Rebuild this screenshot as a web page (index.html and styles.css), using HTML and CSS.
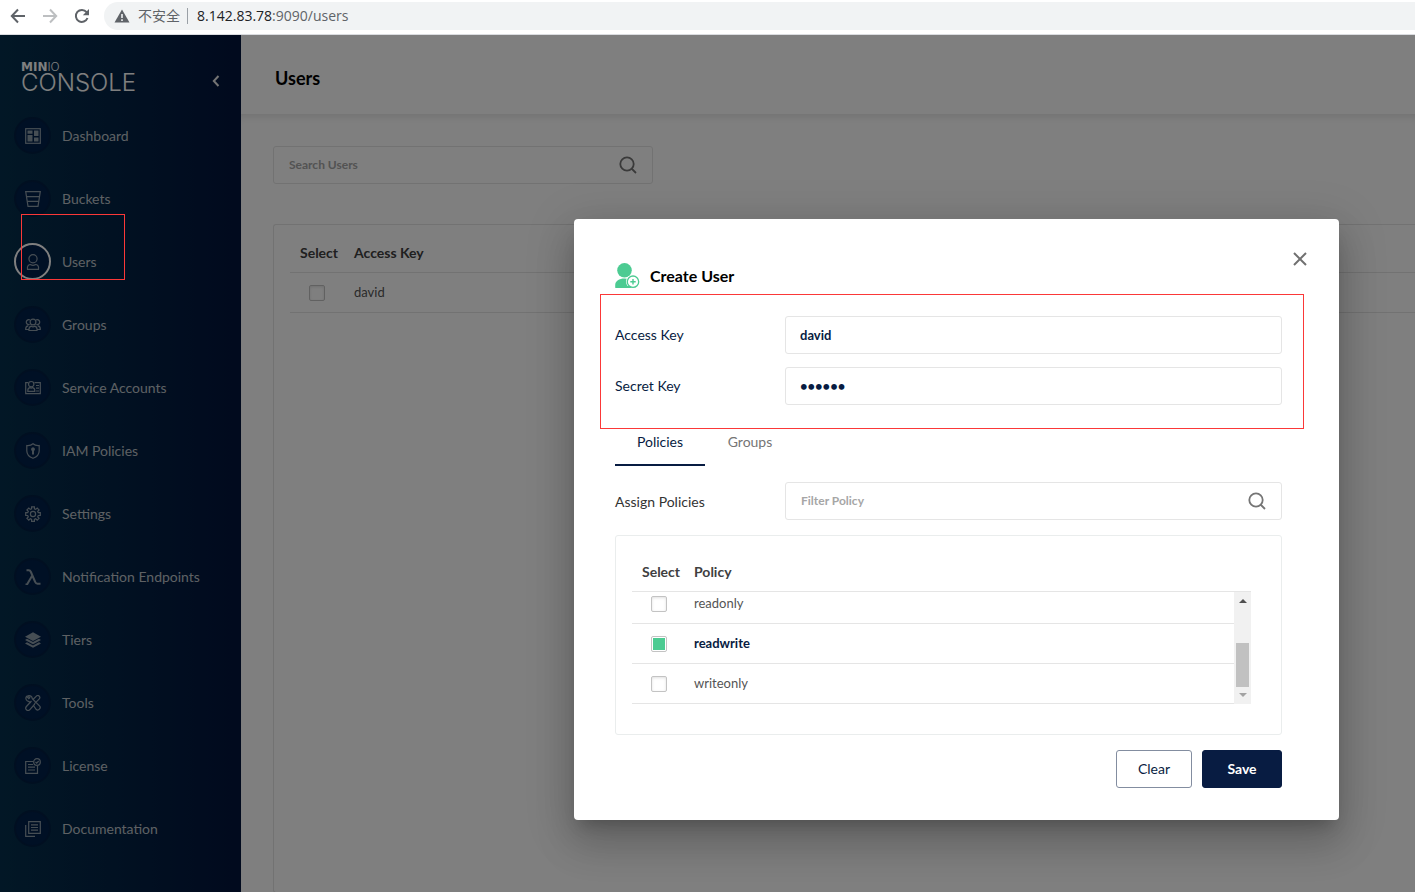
FILE: index.html
```html
<!DOCTYPE html>
<html lang="en">
<head>
<meta charset="utf-8">
<title>MinIO Console</title>
<link rel="stylesheet" href="styles.css">
</head>
<body>
<header class="browser">
  <button class="nav-btn" aria-label="Back"><svg width="16" height="16" viewBox="0 0 16 16"><path d="M15 8H2M8 1.5 1.8 8 8 14.500" fill="none" stroke="#5f6368" stroke-width="2"/></svg></button>
  <button class="nav-btn" aria-label="Forward"><svg width="16" height="16" viewBox="0 0 16 16"><path d="M1 8h13M8 1.500 14.200 8 8 14.500" fill="none" stroke="#bdbfc1" stroke-width="2"/></svg></button>
  <button class="nav-btn" aria-label="Reload"><svg width="16" height="16" viewBox="0 0 16 16"><path d="M13.500 10A6 6 0 1 1 12.600 4.200" fill="none" stroke="#5f6368" stroke-width="2"/><path d="M15 1v6.200H8.800z" fill="#5f6368"/></svg></button>
  <div class="address">
    <svg width="16" height="14" viewBox="0 0 16 14"><path d="M8 0.500 15.500 13.500H.5z" fill="#5f6368"/><path d="M8 5v4M8 10.300v1.700" stroke="#f1f3f4" stroke-width="1.600"/></svg>
    <span class="insecure">不安全</span>
    <span class="url"><b>8.142.83.78</b>:9090/users</span>
  </div>
</header>

<div class="app">
  <aside class="sidebar">
    <div class="brand">
      <div class="logo"><span class="logo-top"><b>MIN</b>IO</span><span class="logo-main">CONSOLE</span></div>
      <button class="collapse" aria-label="Collapse menu"><svg width="8" height="12" viewBox="0 0 8 12"><path d="M6.500 1 1.800 6l4.700 5" fill="none" stroke="currentColor" stroke-width="2"/></svg></button>
    </div>
    <nav class="menu">
      <a href="#" class="item"><span class="disc"><svg viewBox="0 0 16 16"><rect x=".7" y=".7" width="14.600" height="14.600"/><path class="solid" d="M2.500 2.500h5v3.200h-5zM9 2.500h4.500v5.500H9zM2.500 7h5v6.500h-5zM9 9.500h4.500v4H9z"/></svg></span>Dashboard</a>
      <a href="#" class="item"><span class="disc"><svg viewBox="0 0 16 16"><path d="M.7.7h14.600L13 15.300H3zM1.500 5.600h13M2.200 10.400h11.600"/></svg></span>Buckets</a>
      <a href="#" class="item active"><span class="disc"><svg viewBox="0 0 16 16"><circle cx="8" cy="4.800" r="4.100"/><path d="M2.500 15.300c-.6-3.500 1.200-4.800 3-4.800 1.600 1 3.400 1 5 0 1.800 0 3.600 1.300 3 4.800z"/></svg></span>Users</a>
      <a href="#" class="item"><span class="disc"><svg viewBox="0 0 16 16"><circle cx="8" cy="5" r="2.900"/><path d="M4 13.500c-.4-3 1-4 2.300-4.300 1 .7 2.400.7 3.400 0C11 9.500 12.400 10.500 12 13.500zM4.700 7.500C2 8 1 6 1.400 4.500S3.500 2.200 5 3M11.300 7.500C14 8 15 6 14.600 4.500S12.500 2.200 11 3M3.500 12.500H.7C.5 10 1.500 9 3.300 8.800M12.500 12.500h2.800c.2-2.500-.8-3.500-2.600-3.700"/></svg></span>Groups</a>
      <a href="#" class="item"><span class="disc"><svg viewBox="0 0 16 16"><path d="M3 2.700H.7v11h14.600v-11H9.500"/><circle cx="6.200" cy="4.200" r="2.700"/><path d="M2.800 11.300c-.2-2.500 1-3.500 2-3.700.8.500 2 .5 2.800 0 1.200.2 2.400 1.200 2.200 3.700zM11 5.500h3M11 8.200h3M11 11h3"/></svg></span>Service Accounts</a>
      <a href="#" class="item"><span class="disc"><svg viewBox="0 0 16 16"><path d="M8 .8c1.800 1.500 4 1.900 6.200 1.700v5.200c0 3.600-2.800 6.300-6.200 7.600-3.400-1.300-6.200-4-6.200-7.600V2.500C4 2.700 6.200 2.300 8 .8z"/><path class="solid" d="M8 4.300a2 2 0 0 1 1 3.700v3.500H7V8a2 2 0 0 1 1-3.700z"/></svg></span>IAM Policies</a>
      <a href="#" class="item"><span class="disc"><svg viewBox="0 0 16 16"><circle cx="8" cy="8" r="2.600"/><path d="M6.600.8h2.800v2l1.300.6 1.500-1.400 1.900 1.900-1.400 1.500.6 1.300h2v2.800h-2l-.6 1.300 1.400 1.500-1.900 1.900-1.500-1.400-1.300.6v2H6.600v-2l-1.300-.6-1.500 1.400-1.900-1.900 1.400-1.500-.6-1.300h-2V6.700h2l.6-1.300-1.400-1.500L3.800 2l1.500 1.400 1.300-.6z"/></svg></span>Settings</a>
      <a href="#" class="item"><span class="disc"><svg viewBox="0 0 16 16"><path class="bold" d="M1.500 1.200h2.200c1.200 0 1.700.6 2.200 1.800l4.300 10c.5 1.300 1 1.800 2.300 1.800h3M7.300 6.500 2 15.500H.5"/></svg></span>Notification Endpoints</a>
      <a href="#" class="item"><span class="disc"><svg viewBox="0 0 16 16"><path class="solid" d="M8 .3 16 4.700 8 9 0 4.700zM2 6.800l6 3.300 6-3.300 2 1.100-8 4.400-8-4.400zM2 10.300l6 3.300 6-3.300 2 1.100-8 4.400-8-4.400z"/></svg></span>Tiers</a>
      <a href="#" class="item"><span class="disc"><svg viewBox="0 0 16 16"><path d="M6 7.600 2.200 5.700C.5 4.500.6 2.500 1.600 1.400L3.800 3.600l1-.9L3 .9c2-.7 4.200.4 4.300 2.800L14.700 11.200c1.600 1.700-1.200 5-3.400 3.300L8.800 11M9.500 8.700l4.600-4.600c2-2-.7-4.700-2.700-3L8 4.500M6.500 6 1.400 11.500c-2 2.400 1 5.200 3.300 3.300L9.800 9"/></svg></span>Tools</a>
      <a href="#" class="item"><span class="disc"><svg viewBox="0 0 16 16"><path d="M8.500 3.500H.7v11.800h11.800V8M3 6.500h5M3 9.200h7M3 12h7"/><circle cx="12" cy="4" r="3.300"/><path d="m10.500 4 1.200 1.200 2-2.200"/></svg></span>License</a>
      <a href="#" class="item"><span class="disc"><svg viewBox="0 0 16 16"><path d="M3.700.7h11.600v11.600H3.700zM.7 4v11.300h9.300M6 3.800h7M6 6.500h7M6 9.200h7"/></svg></span>Documentation</a>
    </nav>
  </aside>

  <main class="main">
    <header class="page-head"><h1>Users</h1></header>
    <section class="page-body">
      <div class="search search-users">
        <input type="text" placeholder="Search Users" aria-label="Search Users">
        <svg width="18" height="18" viewBox="0 0 18 18"><circle cx="8" cy="8" r="6.700"/><path d="m12.500 12.500 4.500 4.500"/></svg>
      </div>
      <div class="card">
        <table class="grid">
          <thead><tr><th class="col-check">Select</th><th>Access Key</th></tr></thead>
          <tbody><tr><td class="col-check"><input type="checkbox" aria-label="Select david"></td><td>david</td></tr></tbody>
        </table>
      </div>
    </section>
  </main>

  <div class="overlay">
    <form class="dialog" role="dialog" aria-labelledby="dialog-title">
      <button type="button" class="close" aria-label="Close"><svg width="14" height="14" viewBox="0 0 14 14"><path d="m1 1 12 12M13 1 1 13" stroke="#707070" stroke-width="2"/></svg></button>
      <div class="dialog-title">
        <svg width="25" height="27" viewBox="0 0 25 27"><circle cx="9.500" cy="8.300" r="7.300"/><path d="M.2 25.500V23c0-4 4-6.500 9.300-6.500 1.500 0 3 .2 4.200.7v8.800H1.500C.7 26 .2 25.900.2 25.500z"/><circle cx="18" cy="19.700" r="7" fill="#fff"/><circle cx="18" cy="19.700" r="5.700" fill="#fff" stroke="#4ccb92" stroke-width="1.300"/><path d="M11.500 24h3l2 2h-5z"/><path d="M18 17v5.400M15.300 19.700h5.400" stroke="#4ccb92" stroke-width="1.400"/></svg>
        <h2 id="dialog-title">Create User</h2>
      </div>
      <div class="field"><label for="access">Access Key</label><input id="access" class="text" type="text" value="david"></div>
      <div class="field"><label for="secret">Secret Key</label><input id="secret" class="text" type="password" value="secret"></div>
      <div class="tabs" role="tablist">
        <button type="button" role="tab" class="tab selected" aria-selected="true">Policies</button>
        <button type="button" role="tab" class="tab">Groups</button>
      </div>
      <div class="field assign">
        <label for="filter">Assign Policies</label>
        <div class="search">
          <input id="filter" type="text" placeholder="Filter Policy">
          <svg width="18" height="18" viewBox="0 0 18 18"><circle cx="8" cy="8" r="6.700"/><path d="m12.500 12.500 4.500 4.500"/></svg>
        </div>
      </div>
      <div class="policies">
        <div class="policy-list">
          <table class="grid">
            <thead><tr><th class="col-check">Select</th><th>Policy</th></tr></thead>
            <tbody>
              <tr class="clipped"><td class="col-check"><input type="checkbox" id="ro"></td><td><label for="ro">readonly</label></td></tr>
              <tr class="chosen"><td class="col-check"><input type="checkbox" id="rw" checked></td><td><label for="rw">readwrite</label></td></tr>
              <tr><td class="col-check"><input type="checkbox" id="wo"></td><td><label for="wo">writeonly</label></td></tr>
            </tbody>
          </table>
          <div class="scrollbar"><span class="arrow up"></span><span class="thumb"></span><span class="arrow down"></span></div>
        </div>
      </div>
      <div class="actions"><button type="button" class="btn">Clear</button><button type="submit" class="btn primary">Save</button></div>
      <div class="mark mark-form"></div>
    </form>
  </div>
  <div class="mark mark-menu"></div>
</div>
</body>
</html>
```
FILE: styles.css
```css
* { box-sizing: border-box; }
body {
  margin: 0;
  min-height: 100vh;
  display: flex;
  flex-direction: column;
  overflow: hidden;
  font-family: Lato, "Noto Sans CJK SC", sans-serif;
  font-size: 14px;
  color: #000;
}
button, input { font: inherit; }
button { padding: 0; border: 0; background: none; cursor: pointer; }
svg { display: block; }

/* browser bar */
.browser {
  height: 35px;
  display: flex;
  align-items: center;
  gap: 16px;
  padding: 0 0 3px 10px;
  background: #fff;
  border-bottom: 1px solid #dadce0;
}
.address {
  flex: 1;
  height: 28px;
  margin-left: -2px;
  padding-left: 10px;
  display: flex;
  align-items: center;
  background: #f1f3f4;
  border-radius: 14px 0 0 14px;
  font-family: "Open Sans", "Noto Sans CJK SC", sans-serif;
  color: #5f6368;
}
.insecure {
  margin-left: 8px;
  padding-right: 7px;
  line-height: 16px;
  border-right: 1px solid #9aa0a6;
}
.url { margin-left: 9px; }
.url b { font-weight: 400; color: #202124; }

.app { position: relative; flex: 1; display: flex; }

/* sidebar */
.sidebar {
  width: 241px;
  background: linear-gradient(90deg, #042f4c, #02143c);
}
.brand {
  display: flex;
  justify-content: space-between;
  align-items: center;
  height: 82px;
  padding: 10px 21px 0 21px;
  color: #fff;
}
.logo { display: flex; flex-direction: column; padding-bottom: 8px; }
.logo-top { font-family: Inter, sans-serif; font-size: 12px; line-height: 12px; font-weight: 300; }
.logo-top b { font-family: "DejaVu Sans", sans-serif; font-weight: 700; }
.logo-main { font-family: Inter, sans-serif; font-weight: 300; font-size: 24px; line-height: 20px; }
.collapse { color: #e8e8e8; }
.menu { display: flex; flex-direction: column; gap: 26px; padding-left: 14px; }
.item {
  display: flex;
  align-items: center;
  gap: 11px;
  color: #bcc2c8;
  text-decoration: none;
}
.disc {
  width: 37px;
  height: 37px;
  display: grid;
  place-items: center;
  border-radius: 50%;
  border: 2px solid #021f42;
  background: #00204a;
}
.active .disc { border-color: #fff; }
.disc svg { width: 16px; height: 16px; fill: none; stroke: #8d9ca8; stroke-width: 1.2; }
.disc .solid { fill: #8d9ca8; stroke: none; }
.disc .bold { stroke-width: 2; }

/* page */
.main { flex: 1; min-width: 0; background: #fff; }
.page-head {
  height: 79px;
  display: flex;
  align-items: center;
  padding: 6px 34px 0;
}
.page-head h1 { margin: 0; font-size: 18px; font-weight: 700; }
.page-body {
  padding: 32px 0 0 32px;
  display: flex;
  flex-direction: column;
  gap: 40px;
  min-height: 779px;
  box-shadow: inset 0 8px 10px -6px #e0e0e0;
}
.search {
  display: flex;
  align-items: center;
  height: 38px;
  padding: 0 15px;
  border: 1px solid #e5e5e5;
  border-radius: 3px;
}
.search-users { width: 380px; }
.search input {
  flex: 1;
  min-width: 0;
  padding: 0 0 1px;
  border: 0;
  outline: 0;
  background: none;
  font-size: 12px;
  font-weight: 700;
}
.search input::placeholder { color: #a6a6a6; opacity: 1; }
.search svg { fill: none; stroke: #757575; stroke-width: 1.8; }
.card {
  flex: 1;
  padding: 8px 0 0 16px;
  border: 1px solid #e5e5e5;
  border-right: 0;
  border-radius: 3px 0 0 3px;
}
.grid { width: 100%; border-collapse: separate; border-spacing: 0; text-align: left; }
.grid th { height: 40px; padding: 0; font-weight: 700; color: #404040; border-bottom: 1px solid #e5e5e5; }
.grid td { height: 40px; padding: 0 0 1px; font-size: 13px; color: #545454; border-bottom: 1px solid #e5e5e5; }
.grid .col-check { width: 64px; padding-left: 10px; }
.grid td.col-check { padding-left: 19px; }
.grid input {
  appearance: none;
  display: block;
  width: 16px;
  height: 16px;
  margin: 2px 0 0;
  padding: 1px;
  border: 1px solid #c3c3c3;
  border-radius: 2px;
  background: #fff;
  box-shadow: inset 0 1px 3px #e0e0e0;
}
.grid input:checked { background: #4ccb92 content-box; box-shadow: none; }

/* dialog */
.overlay {
  position: absolute;
  inset: 0;
  display: flex;
  justify-content: flex-end;
  align-items: flex-start;
  padding: 184px 76px 0 0;
  background: rgba(0, 0, 0, .5);
}
.dialog {
  position: relative;
  width: 765px;
  padding: 43px 57px 32px 41px;
  background: #fff;
  border-radius: 4px;
  box-shadow: 0 11px 15px -7px rgba(0, 0, 0, .2), 0 24px 38px 3px rgba(0, 0, 0, .14), 0 9px 46px 8px rgba(0, 0, 0, .12);
}
.close { position: absolute; top: 33px; right: 32px; }
.dialog-title { display: flex; align-items: center; gap: 10px; margin-bottom: 27px; }
.dialog-title svg { fill: #4ccb92; }
.dialog-title h2 { margin: 0; font-size: 16px; line-height: 27px; font-weight: 700; }
.field { display: flex; align-items: center; margin-bottom: 13px; }
.field > label { width: 170px; padding-bottom: 2px; color: #081c42; }
.text {
  flex: 1;
  min-width: 0;
  height: 38px;
  padding: 0 14px;
  border: 1px solid #e5e5e5;
  border-radius: 3px;
  color: #081c42;
  font-size: 13px;
  font-weight: 700;
}
.tabs { display: flex; margin-bottom: 16px; }
.tab { width: 90px; height: 48px; border-bottom: 2px solid transparent; color: #757575; }
.tab.selected { color: #081c42; border-color: #081c42; }
.assign { margin-bottom: 15px; }
.assign > label { padding-bottom: 0; color: #333; }
.assign .search { flex: 1; }
.policies {
  height: 200px;
  padding: 16px 30px 0 16px;
  border: 1px solid #eaeded;
  border-radius: 3px;
}
.policy-list { position: relative; }
.policy-list .grid .col-check { width: 62px; }
.policy-list tr.clipped td { height: 32px; padding-bottom: 10px; }
.grid .chosen td { color: #081c42; font-weight: 700; }
.scrollbar {
  position: absolute;
  right: 0;
  bottom: 0;
  width: 17px;
  height: 112px;
  display: flex;
  flex-direction: column;
  align-items: center;
  padding: 7px 0 7px;
  background: #f1f1f1;
}
.thumb { width: 13px; height: 44px; margin: auto 0 6px; background: #c1c1c1; }
.arrow { border: 4px solid transparent; border-top-width: 0; border-bottom: 4px solid #505050; }
.arrow.down { border-bottom-width: 0; border-top: 4px solid #a3a3a3; }
.actions { display: flex; justify-content: flex-end; gap: 10px; margin-top: 15px; }
.btn {
  width: 76px;
  height: 38px;
  padding-bottom: 2px;
  border: 1px solid #838da0;
  border-radius: 3px;
  color: #081c42;
}
.btn.primary { width: 80px; background: #081c42; border-color: #081c42; color: #fff; font-weight: 700; }

/* highlight frames */
.mark { position: absolute; border: 1px solid #fb3838; pointer-events: none; }
.mark-form { left: 26px; top: 75px; width: 704px; height: 135px; }
.mark-menu { left: 21px; top: 179px; width: 104px; height: 66px; }
```
